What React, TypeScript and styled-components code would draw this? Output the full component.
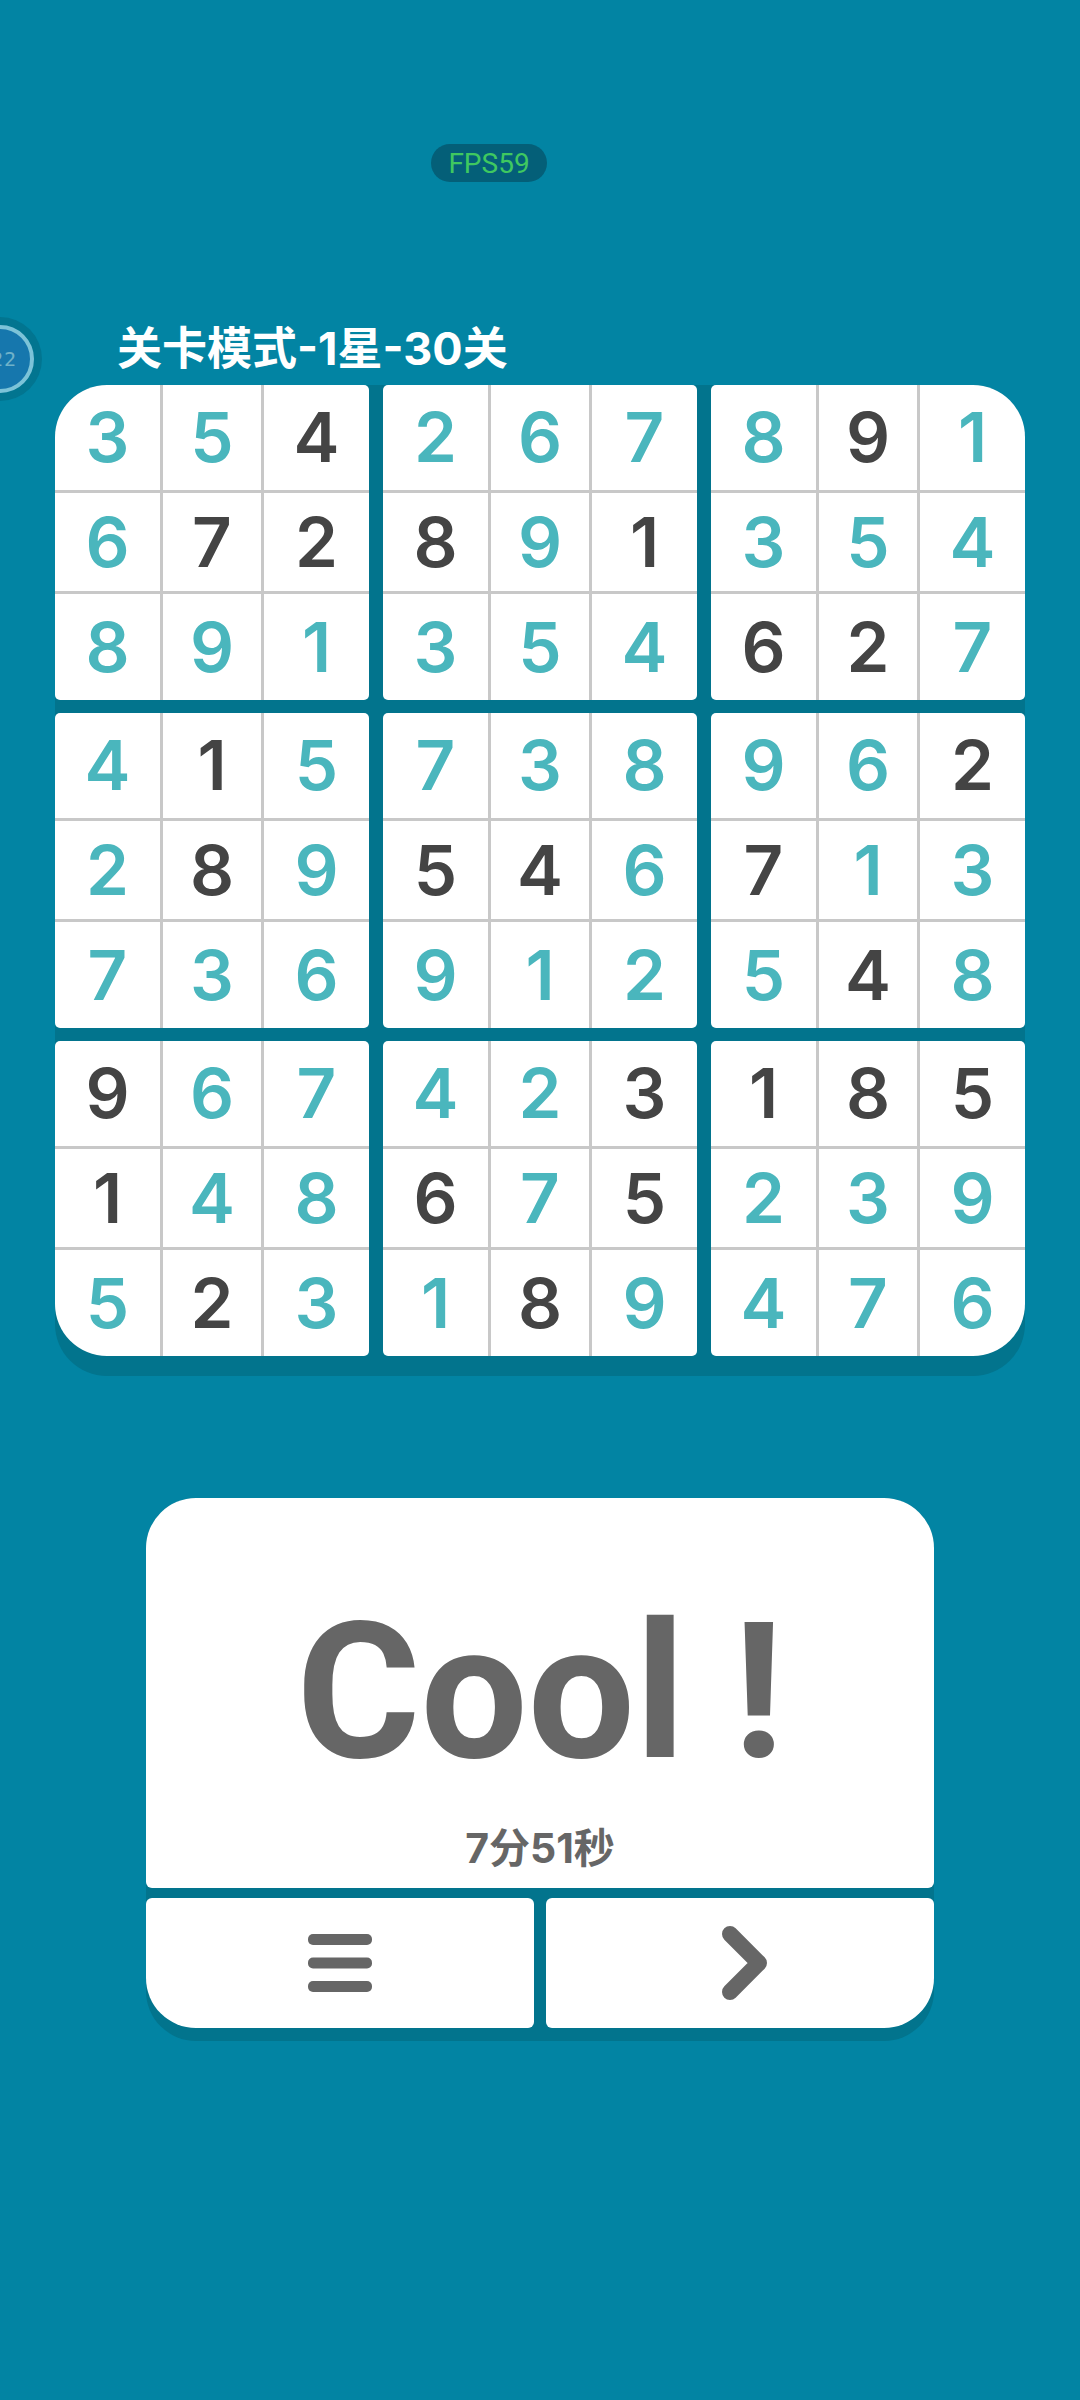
import React from "react";
import styled, { createGlobalStyle } from "styled-components";

const Global = createGlobalStyle`
  html, body { margin: 0; padding: 0; background: #0284a3; }
  #root { width: 1080px; height: 2400px; }
`;

const Page = styled.div`
  position: relative;
  width: 1080px;
  height: 2400px;
  overflow: hidden;
  background: #0284a3;
  display: flex;
  flex-direction: column;
  align-items: flex-start;
  padding-top: 144px;
  box-sizing: border-box;
`;

const Fps = styled.div`
  align-self: flex-start;
  margin-left: 431px;
  width: 116px;
  height: 38px;
  border-radius: 19px;
  background: #045f78;
  color: #3fc860;
  font: 400 28px/40px Roboto, sans-serif;
  text-align: center;
`;

const Title = styled.div`
  margin: 143px 0 0 117px;
  height: 60px;
  color: #fff;
  font: 700 45px/48px Inter, "Noto Sans CJK SC", sans-serif;
  white-space: nowrap;
`;

const Timer = styled.div`
  position: absolute;
  left: -42px;
  top: 317px;
  width: 84px;
  height: 84px;
  border-radius: 50%;
  background: #027590;
  display: flex;
  align-items: center;
  justify-content: center;
`;

const TimerFace = styled.div`
  width: 68px;
  height: 68px;
  box-sizing: border-box;
  border-radius: 50%;
  border: 4px solid #7cc3d8;
  background: #1677ad;
  color: #6fb2c9;
  font: 400 20px/60px "DejaVu Sans Mono", monospace;
  text-align: right;
  padding-right: 13px;
  letter-spacing: 1px;
`;

const Board = styled.div`
  margin-left: 55px;
  width: 970px;
  height: 971px;
  border-radius: 52px;
  background: #02748d;
  box-shadow: 0 20px 0 #02748d;
  display: grid;
  grid-template-columns: repeat(3, 314px);
  grid-template-rows: repeat(3, 315px);
  gap: 13px 14px;
`;

type Corner = "tl" | "tr" | "bl" | "br" | "none";

const Block = styled.div<{ $corner: Corner }>`
  background: #fff;
  overflow: hidden;
  display: grid;
  grid-template-columns: 108px 101px 105px;
  grid-template-rows: 108px 101px 106px;
  border-radius: ${(p) =>
    p.$corner === "tl"
      ? "52px 5px 5px 5px"
      : p.$corner === "tr"
      ? "5px 52px 5px 5px"
      : p.$corner === "bl"
      ? "5px 5px 5px 52px"
      : p.$corner === "br"
      ? "5px 5px 52px 5px"
      : "5px"};
`;

const Cell = styled.div<{ $given: boolean; $col: number; $row: number }>`
  display: flex;
  align-items: center;
  justify-content: center;
  box-sizing: border-box;
  border-right: ${(p) => (p.$col < 2 ? "3px solid #c8c8c8" : "0")};
  border-bottom: ${(p) => (p.$row < 2 ? "3px solid #c8c8c8" : "0")};
  color: ${(p) => (p.$given ? "#444444" : "#4ab6bd")};
  font: 600 69px/1 Inter, sans-serif;
`;

const Result = styled.div`
  margin: 142px 0 0 146px;
  width: 788px;
  height: 530px;
  border-radius: 50px;
  background: #02748d;
  box-shadow: 0 13px 0 #02748d;
  display: grid;
  grid-template-columns: 1fr 1fr;
  grid-template-rows: 390px 130px;
  gap: 10px 12px;
`;

const Summary = styled.div`
  grid-column: 1 / 3;
  background: #fff;
  border-radius: 50px 50px 6px 6px;
  color: #666;
  display: flex;
  flex-direction: column;
  align-items: center;
`;

const Cool = styled.div`
  margin-top: 83px;
  height: 222px;
  font: 700 190px/222px Roboto, sans-serif;
  white-space: pre;
`;

const Time = styled.div`
  margin-top: 21px;
  font: 700 41px/48px Inter, "Noto Sans CJK SC", sans-serif;
`;

const ActionButton = styled.div<{ $side: "left" | "right" }>`
  background: #fff;
  border-radius: ${(p) => (p.$side === "left" ? "6px 6px 6px 50px" : "6px 6px 50px 6px")};
  display: flex;
  align-items: center;
  justify-content: center;
`;

const ChevronMark = styled.svg`
  margin-left: 9px;
`;

const MenuIcon = () => (
  <svg width="64" height="58" viewBox="0 0 64 58" fill="#666">
    <rect x="0" y="0" width="64" height="11" rx="5" />
    <rect x="0" y="23.500" width="64" height="11" rx="5" />
    <rect x="0" y="47" width="64" height="11" rx="5" />
  </svg>
);

const ChevronIcon = () => (
  <ChevronMark width="46" height="76" viewBox="0 0 46 76" fill="none" stroke="#666" strokeWidth="16" strokeLinecap="round" strokeLinejoin="round">
    <path d="M8 9 L37 38 L8 67" />
  </ChevronMark>
);

const grid = [
  ["354672891", "267891354", "891354627"],
  ["415289736", "738546912", "962713548"],
  ["967148523", "423675189", "185239476"],
];
// Digits drawn dark are the given clues of the puzzle.
const dark = [
  ["001011000", "000101000", "010000110"],
  ["010010000", "000110000", "001100010"],
  ["100100010", "001101010", "111000000"],
];

const corners: Corner[][] = [
  ["tl", "none", "tr"],
  ["none", "none", "none"],
  ["bl", "none", "br"],
];

export default function App() {
  return (
    <Page>
      <Global />
      <Fps>FPS59</Fps>
      <Timer>
        <TimerFace>22</TimerFace>
      </Timer>
      <Title>关卡模式-1星-30关</Title>
      <Board>
        {grid.map((row, r) =>
          row.map((digits, c) => (
            <Block key={`${r}-${c}`} $corner={corners[r][c]}>
              {digits.split("").map((d, i) => (
                <Cell key={i} $col={i % 3} $row={Math.floor(i / 3)} $given={dark[r][c][i] === "1"}>
                  {d}
                </Cell>
              ))}
            </Block>
          ))
        )}
      </Board>
      <Result>
        <Summary>
          <Cool>Cool !</Cool>
          <Time>7分51秒</Time>
        </Summary>
        <ActionButton $side="left">
          <MenuIcon />
        </ActionButton>
        <ActionButton $side="right">
          <ChevronIcon />
        </ActionButton>
      </Result>
    </Page>
  );
}
